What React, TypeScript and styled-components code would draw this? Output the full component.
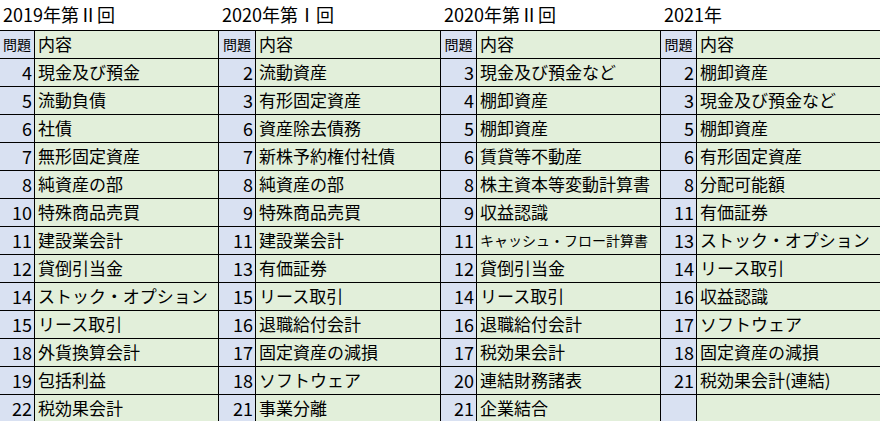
import styled, { createGlobalStyle } from "styled-components"

const GlobalStyle = createGlobalStyle`
  html, body {
    margin: 0;
    padding: 0;
    background: #ffffff;
  }
  body {
    font-family: "Noto Sans CJK JP", "Noto Sans", sans-serif;
    color: #000000;
  }
`

type Item = { no: number; text: string; small?: boolean }
type Exam = { title: string; items: Item[] }

const exams: Exam[] = [
  {
    title: "2019年第Ⅱ回",
    items: [
      { no: 4, text: "現金及び預金" },
      { no: 5, text: "流動負債" },
      { no: 6, text: "社債" },
      { no: 7, text: "無形固定資産" },
      { no: 8, text: "純資産の部" },
      { no: 10, text: "特殊商品売買" },
      { no: 11, text: "建設業会計" },
      { no: 12, text: "貸倒引当金" },
      { no: 14, text: "ストック・オプション" },
      { no: 15, text: "リース取引" },
      { no: 18, text: "外貨換算会計" },
      { no: 19, text: "包括利益" },
      { no: 22, text: "税効果会計" },
    ],
  },
  {
    title: "2020年第Ⅰ回",
    items: [
      { no: 2, text: "流動資産" },
      { no: 3, text: "有形固定資産" },
      { no: 6, text: "資産除去債務" },
      { no: 7, text: "新株予約権付社債" },
      { no: 8, text: "純資産の部" },
      { no: 9, text: "特殊商品売買" },
      { no: 11, text: "建設業会計" },
      { no: 13, text: "有価証券" },
      { no: 15, text: "リース取引" },
      { no: 16, text: "退職給付会計" },
      { no: 17, text: "固定資産の減損" },
      { no: 18, text: "ソフトウェア" },
      { no: 21, text: "事業分離" },
    ],
  },
  {
    title: "2020年第Ⅱ回",
    items: [
      { no: 3, text: "現金及び預金など" },
      { no: 4, text: "棚卸資産" },
      { no: 5, text: "棚卸資産" },
      { no: 6, text: "賃貸等不動産" },
      { no: 8, text: "株主資本等変動計算書" },
      { no: 9, text: "収益認識" },
      { no: 11, text: "キャッシュ・フロー計算書", small: true },
      { no: 12, text: "貸倒引当金" },
      { no: 14, text: "リース取引" },
      { no: 16, text: "退職給付会計" },
      { no: 17, text: "税効果会計" },
      { no: 20, text: "連結財務諸表" },
      { no: 21, text: "企業結合" },
    ],
  },
  {
    title: "2021年",
    items: [
      { no: 2, text: "棚卸資産" },
      { no: 3, text: "現金及び預金など" },
      { no: 5, text: "棚卸資産" },
      { no: 6, text: "有形固定資産" },
      { no: 8, text: "分配可能額" },
      { no: 11, text: "有価証券" },
      { no: 13, text: "ストック・オプション" },
      { no: 14, text: "リース取引" },
      { no: 16, text: "収益認識" },
      { no: 17, text: "ソフトウェア" },
      { no: 18, text: "固定資産の減損" },
      { no: 21, text: "税効果会計(連結)" },
    ],
  },
]

const ROWS = 13
const COLUMNS = "34px 183px 36px 184px 35px 183px 35px 183px"

const App = () => {
  const rows = Array.from({ length: ROWS }, (_, i) => i)
  return (
    <>
      <GlobalStyle />
      <Sheet>
        <TitleRow>
          {exams.map((exam) => (
            <Title key={exam.title}>{exam.title}</Title>
          ))}
        </TitleRow>
        <Table>
          {exams.map((exam) => (
            <Pair key={exam.title + "-h"}>
              <NumHead>問題</NumHead>
              <TextHead>内容</TextHead>
            </Pair>
          ))}
          {rows.map((r) =>
            exams.map((exam) => {
              const item = exam.items[r]
              return (
                <Pair key={exam.title + r}>
                  <NumCell>{item ? item.no : ""}</NumCell>
                  <TextCell $small={item?.small}>{item ? item.text : ""}</TextCell>
                </Pair>
              )
            })
          )}
        </Table>
      </Sheet>
    </>
  )
}

export default App

const Sheet = styled.div`
  width: 880px;
  height: 421px;
  overflow: hidden;
  background: #ffffff;
`

const TitleRow = styled.div`
  display: grid;
  grid-template-columns: 218px 222px 220px 220px;
  height: 30px;
`

const Title = styled.div`
  display: flex;
  align-items: center;
  padding-left: 3px;
  padding-bottom: 2px;
  font-size: 18px;
  line-height: 1;
  white-space: nowrap;
  &:not(:first-child) {
    padding-left: 4px;
  }
`

const Table = styled.div`
  display: grid;
  grid-template-columns: ${COLUMNS};
  grid-auto-rows: 27px;
  gap: 1px;
  background: #000000;
  border-top: 1px solid #000000;
`

// each pair of cells flows straight into the parent grid
const Pair = styled.div`
  display: contents;
`

const NumBase = styled.div`
  background: #d9e1f2;
  display: flex;
  align-items: center;
  line-height: 1;
  padding-bottom: 2px;
  white-space: nowrap;
  overflow: hidden;
`

const NumHead = styled(NumBase)`
  justify-content: center;
  font-size: 14px;
`

const NumCell = styled(NumBase)`
  justify-content: flex-end;
  padding-right: 2px;
  font-size: 18px;
`

const TextBase = styled.div`
  background: #e2efda;
  display: flex;
  align-items: center;
  padding-left: 3px;
  padding-bottom: 2px;
  line-height: 1;
  white-space: nowrap;
  overflow: hidden;
`

const TextHead = styled(TextBase)`
  font-size: 17px;
`

const TextCell = styled(TextBase)<{ $small?: boolean }>`
  font-size: ${({ $small }) => ($small ? "14px" : "17px")};
`
